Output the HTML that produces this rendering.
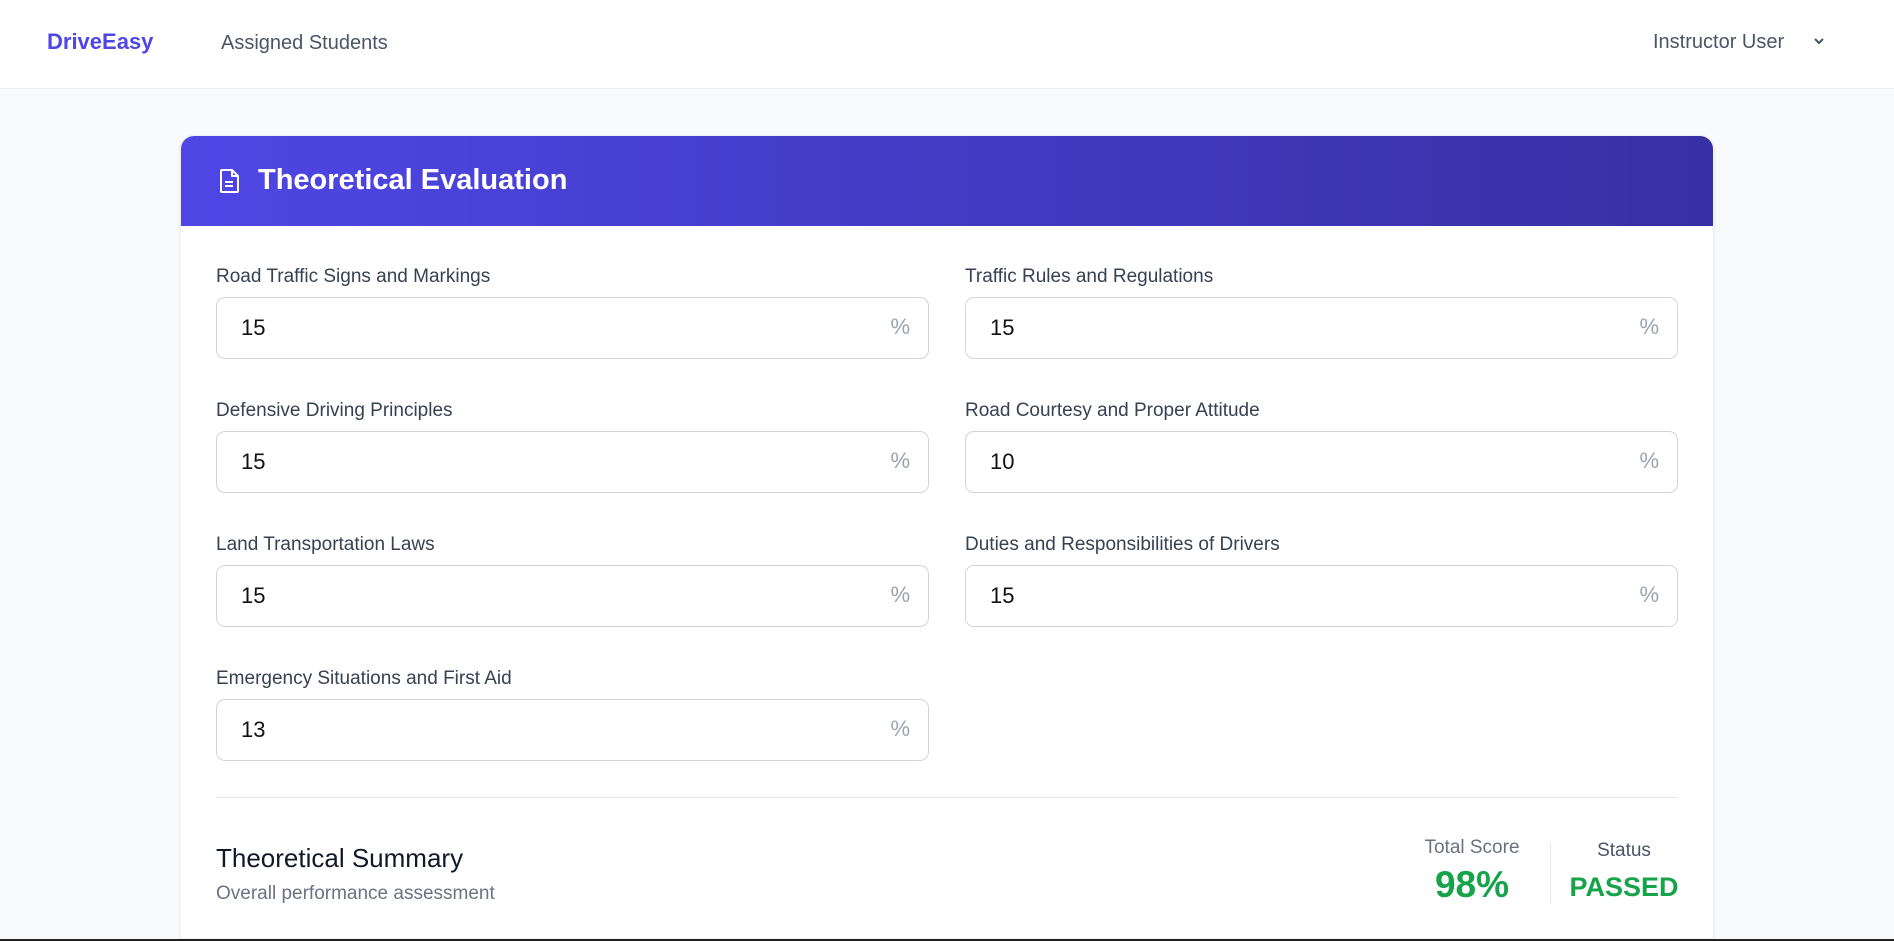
<!DOCTYPE html>
<html><head><meta charset="utf-8"><style>
*{box-sizing:border-box;margin:0;padding:0}
html,body{width:1894px;height:941px;overflow:hidden}
body{background:#f9fafb;font-family:"Liberation Sans",sans-serif;position:relative}
.nav{position:absolute;left:0;top:0;width:1894px;height:89px;background:#fff;border-bottom:1px solid #eceef1}
.abs{position:absolute;white-space:nowrap}
.card{position:absolute;left:180px;top:135px;width:1534px;height:804px;background:#fff;border-radius:14px 14px 0 0;box-shadow:0 1px 3px rgba(0,0,0,.08);overflow:hidden;border:1px solid #eef0f3}
.hdr{position:absolute;left:0;top:0;width:100%;height:90px;background:linear-gradient(90deg,#4f46e5,#3730a3)}
.lbl{position:absolute;font-size:19px;color:#374151}
.inp{position:absolute;width:713px;height:62px;border:1px solid #d1d5db;border-radius:9px;background:#fff}
.inp span{position:absolute;left:24px;top:17px;font-size:22px;color:#111}
.inp i{position:absolute;right:18px;top:16px;font-style:normal;font-size:22px;color:#9ca3af}
</style></head><body>
<div class="nav">
<div class="abs" style="left:47px;top:29px;font-size:22px;font-weight:bold;color:#4f46e5">DriveEasy</div>
<div class="abs" style="left:221px;top:32px;font-size:20px;color:#4b5563">Assigned Students</div>
<div class="abs" style="left:1653px;top:31px;font-size:20px;color:#4b5563">Instructor User</div>
<svg class="abs" style="left:1812px;top:34px" width="14" height="14" viewBox="0 0 14 14"><path d="M3 5l4 4 4-4" stroke="#4b5563" stroke-width="2" fill="none"/></svg>
</div>
<div class="card">
<div class="hdr">
<svg class="abs" style="left:38px;top:32px" width="22" height="26" viewBox="0 0 22 26"><path d="M3 2h10l6 6v15a1 1 0 0 1-1 1H3a1 1 0 0 1-1-1V3a1 1 0 0 1 1-1zM13 2v6h6M6 14h8M6 18h8" stroke="#fff" stroke-width="2" fill="none" stroke-linejoin="round"/></svg>
<div class="abs" style="left:77px;top:28px;font-size:29px;font-weight:bold;color:#fff">Theoretical Evaluation</div>
</div>
</div>
<div class="lbl" style="left:216px;top:266px">Road Traffic Signs and Markings</div>
<div class="inp" style="left:216px;top:297px"><span>15</span><i>%</i></div>
<div class="lbl" style="left:965px;top:266px">Traffic Rules and Regulations</div>
<div class="inp" style="left:965px;top:297px"><span>15</span><i>%</i></div>
<div class="lbl" style="left:216px;top:400px">Defensive Driving Principles</div>
<div class="inp" style="left:216px;top:431px"><span>15</span><i>%</i></div>
<div class="lbl" style="left:965px;top:400px">Road Courtesy and Proper Attitude</div>
<div class="inp" style="left:965px;top:431px"><span>10</span><i>%</i></div>
<div class="lbl" style="left:216px;top:534px">Land Transportation Laws</div>
<div class="inp" style="left:216px;top:565px"><span>15</span><i>%</i></div>
<div class="lbl" style="left:965px;top:534px">Duties and Responsibilities of Drivers</div>
<div class="inp" style="left:965px;top:565px"><span>15</span><i>%</i></div>
<div class="lbl" style="left:216px;top:668px">Emergency Situations and First Aid</div>
<div class="inp" style="left:216px;top:699px"><span>13</span><i>%</i></div>
<div class="abs" style="left:216px;top:797px;width:1462px;height:1px;background:#e5e7eb"></div>
<div class="abs" style="left:216px;top:843px;font-size:26px;color:#111827">Theoretical Summary</div>
<div class="abs" style="left:216px;top:883px;font-size:19px;color:#6b7280">Overall performance assessment</div>
<div class="abs" style="left:1412px;top:837px;width:120px;text-align:center;font-size:19px;color:#6b7280">Total Score</div>
<div class="abs" style="left:1412px;top:864px;width:120px;text-align:center;font-size:37px;font-weight:bold;color:#16a34a">98%</div>
<div class="abs" style="left:1550px;top:843px;width:1px;height:60px;background:#e5e7eb"></div>
<div class="abs" style="left:1568px;top:840px;width:112px;text-align:center;font-size:19px;color:#4b5563">Status</div>
<div class="abs" style="left:1568px;top:872px;width:112px;text-align:center;font-size:27px;font-weight:bold;color:#16a34a">PASSED</div>
<div class="abs" style="left:0;top:939px;width:1894px;height:2px;background:#222"></div>
</body></html>
